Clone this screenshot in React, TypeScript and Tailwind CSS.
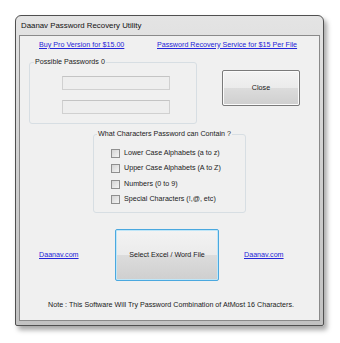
import React from "react";

function Checkbox({ label }: { label: string }) {
  return (
    <div className="flex items-center h-[15.3px]">
      <div className="w-[9px] h-[9px] border border-[#8f8f8f] bg-gradient-to-br from-[#d4d4d4] to-[#f4f4f4] shrink-0" />
      <span className="ml-[4px]">{label}</span>
    </div>
  );
}

function Win7Button({ label, focused, className }: { label: string; focused?: boolean; className: string }) {
  return (
    <div
      className={
        "flex items-center justify-center rounded-[2px] border bg-[linear-gradient(to_bottom,#f3f3f3_0%,#ebebeb_50%,#dcdcdc_50%,#cfcfcf_100%)] " +
        (focused ? "border-[#4aa8df] shadow-[inset_0_0_0_1px_#bfe6f8]" : "border-[#7a7a7a] shadow-[inset_0_0_0_1px_#fbfbfb]") +
        " " +
        className
      }
    >
      <span>{label}</span>
    </div>
  );
}

export default function App() {
  return (
    <div className="w-[340px] h-[343px] bg-white pt-[15px] pl-[15px] font-['Liberation_Sans',Arial,sans-serif] text-[#1a1a1a]">
      <div className="w-[309px] h-[311px] rounded-t-[6px] rounded-b-[2px] border border-[#505050] bg-gradient-to-b from-[#e4e4e4] via-[#cfcfcf] to-[#c2c2c2] shadow-[3px_4px_5px_rgba(0,0,0,0.35)] flex flex-col px-[3px] pb-[4px]">
        <div className="h-[19px] flex items-center pl-[2px] text-[7.85px] text-[#111]">
          Daanav Password Recovery Utility
        </div>
        <div className="flex-1 border border-[#8a8a8a] bg-[#f0f0f0] text-[7.15px] leading-[9px] flex flex-col">
          {/* links row */}
          <div className="h-[18px] flex items-center pl-[19px]">
            <span className="w-[118px]">
              <span className="text-[#2424d8] underline">Buy Pro Version for $15.00</span>
            </span>
            <span className="text-[#2424d8] underline">Password Recovery Service for $15 Per File</span>
          </div>

          {/* group 1 + close */}
          <div className="flex mt-[4px]">
            <fieldset className="ml-[9px] w-[168px] h-[66px] border border-[#d7dee3] rounded-[3px] m-0 p-0">
              <legend className="ml-[4px] px-[1px]">Possible Passwords 0</legend>
              <div className="flex flex-col pl-[32px] pt-[9px] gap-[10px]">
                <div className="w-[108px] h-[14px] border border-[#d0d0d0] border-t-[#c4c4c4] bg-[#eeeeee]" />
                <div className="w-[108px] h-[14px] border border-[#d0d0d0] border-t-[#c4c4c4] bg-[#eeeeee]" />
              </div>
            </fieldset>
            <Win7Button label="Close" className="ml-[25px] mt-[12px] w-[78px] h-[36px]" />
          </div>

          {/* group 2 */}
          <fieldset className="ml-[73px] mt-[6px] w-[153px] h-[83px] border border-[#d7dee3] rounded-[3px] p-0">
            <legend className="ml-[3px] px-[1px]">What Characters Password can Contain ?</legend>
            <div className="flex flex-col pl-[17px] pt-[7px]">
              <Checkbox label="Lower Case Alphabets (a to z)" />
              <Checkbox label="Upper Case Alphabets (A to Z)" />
              <Checkbox label="Numbers (0 to 9)" />
              <Checkbox label="Special Characters (!,@, etc)" />
            </div>
          </fieldset>

          {/* select row */}
          <div className="flex items-center mt-[16px]">
            <span className="ml-[19px] w-[76px] text-[#2424d8] underline">Daanav.com</span>
            <Win7Button label="Select Excel / Word File" focused className="w-[104px] h-[52px]" />
            <span className="ml-[25px] text-[#2424d8] underline">Daanav.com</span>
          </div>

          {/* note */}
          <div className="mt-[20px] text-center pl-[3px]">
            Note : This Software Will Try Password Combination of AtMost 16 Characters.
          </div>
        </div>
      </div>
    </div>
  );
}
